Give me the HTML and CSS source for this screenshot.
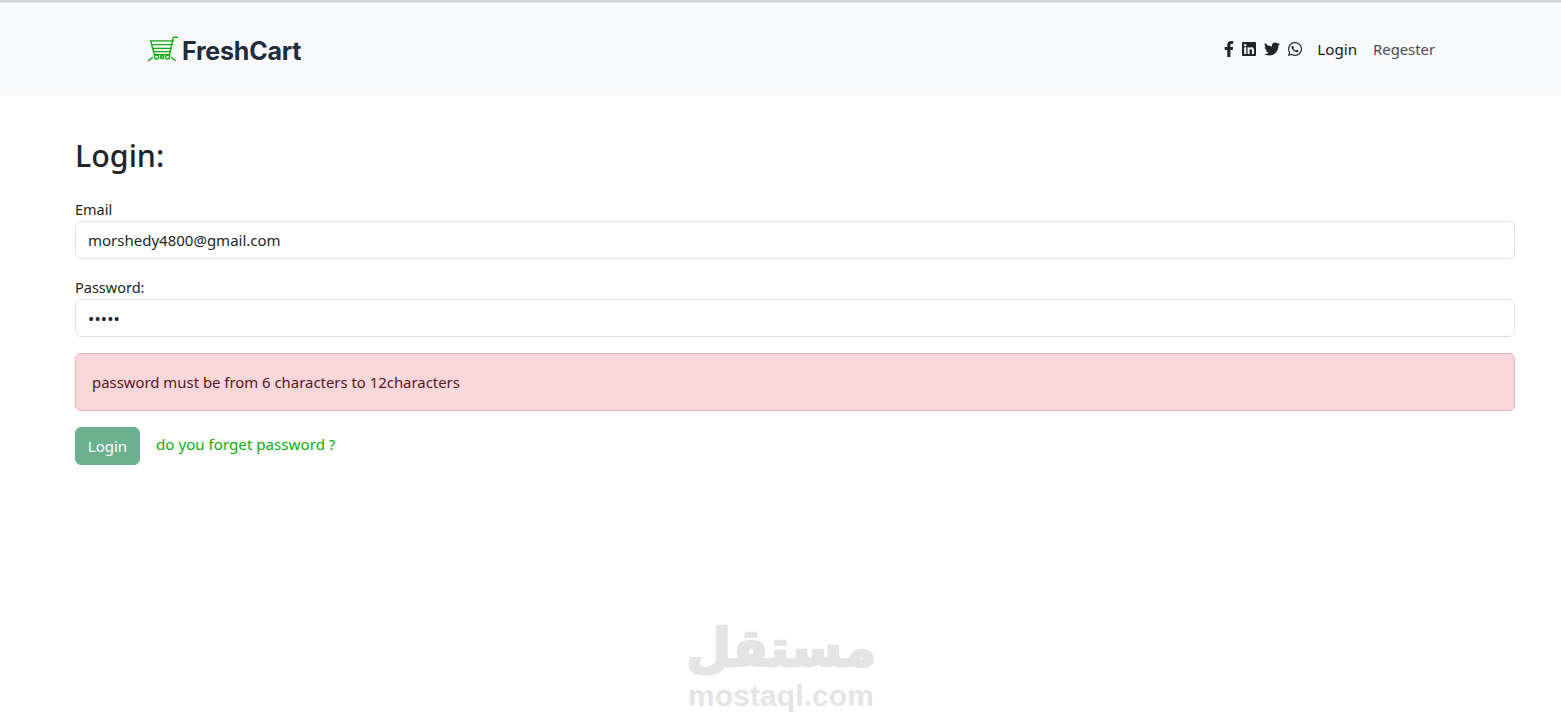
FILE: index.html
```html
<!DOCTYPE html>
<html lang="en">
<head>
<meta charset="utf-8">
<title>FreshCart</title>
<link rel="stylesheet" href="styles.css">
</head>
<body>
<div class="topline"></div>
<nav class="navbar">
  <a class="brand" href="#">
    <svg class="cart" viewBox="0 0 32 26" width="32" height="26" fill="none" stroke="#14ab14" stroke-width="1.4">
      <path d="M31 1.200h-3.400c-1 0-1.500.5-1.800 1.500L22.600 18.600H7.400L3.700 4.900h23.500"/>
      <path d="M4.600 8.600h21.600M5.700 12.400h19.600M6.400 15.600h17.600" stroke-width="1.200"/>
      <circle cx="9.600" cy="21" r="2"/><circle cx="20.600" cy="21" r="2"/><rect x="13.800" y="19.800" width="2.600" height="2.600"/>
      <path d="M1 25c2-1.600 3.500-2.800 5-3.600M24 21.400c2 .8 3 1.800 4.500 3.600"/>
    </svg>
    <span class="brand-name">FreshCart</span>
  </a>
  <div class="nav-right">
    <div class="socials">
      <svg class="ic ic-f" viewBox="0 0 320 512"><path d="M279.140 288l14.220-92.660h-88.910v-60.130c0-25.350 12.420-50.060 52.240-50.060h40.420V6.260S260.430 0 225.360 0c-73.220 0-121.080 44.380-121.080 124.720v70.620H22.890V288h81.390v224h100.170V288z"/></svg>
      <svg class="ic ic-in" viewBox="0 0 448 512"><path d="M416 32H31.900C14.300 32 0 46.500 0 64.300v383.400C0 465.500 14.300 480 31.900 480H416c17.600 0 32-14.500 32-32.300V64.300c0-17.800-14.400-32.300-32-32.300zM135.400 416H69V202.200h66.500V416zm-33.200-243c-21.300 0-38.500-17.300-38.500-38.500S80.900 96 102.200 96c21.200 0 38.500 17.300 38.500 38.500 0 21.300-17.200 38.500-38.500 38.500zm282.100 243h-66.400V312c0-24.800-.5-56.700-34.500-56.700-34.600 0-39.900 27-39.900 54.900V416h-66.400V202.200h63.700v29.200h.9c8.900-16.800 30.600-34.500 62.900-34.500 67.200 0 79.700 44.300 79.700 101.900V416z"/></svg>
      <svg class="ic ic-tw" viewBox="0 0 512 512"><path d="M459.370 151.716c.325 4.548.325 9.097.325 13.645 0 138.720-105.583 298.558-298.558 298.558-59.452 0-114.680-17.219-161.137-47.106 8.447.974 16.568 1.299 25.340 1.299 49.055 0 94.213-16.568 130.274-44.832-46.132-.975-84.792-31.188-98.112-72.772 6.498.974 12.995 1.624 19.818 1.624 9.421 0 18.843-1.300 27.614-3.573-48.081-9.747-84.143-51.980-84.143-102.985v-1.299c13.969 7.797 30.214 12.670 47.431 13.319-28.264-18.843-46.781-51.005-46.781-87.391 0-19.492 5.197-37.360 14.294-52.954 51.655 63.675 129.300 105.258 216.365 109.807-1.624-7.797-2.599-15.918-2.599-24.040 0-57.828 46.782-104.934 104.934-104.934 30.213 0 57.502 12.670 76.670 33.137 23.715-4.548 46.456-13.320 66.599-25.340-7.798 24.366-24.366 44.833-46.132 57.827 21.117-2.273 41.584-8.122 60.426-16.243-14.292 20.791-32.161 39.308-52.628 54.253z"/></svg>
      <svg class="ic ic-wa" viewBox="0 0 448 512"><path d="M380.900 97.100C339 55.100 283.200 32 223.900 32c-122.400 0-222 99.600-222 222 0 39.100 10.200 77.300 29.600 111L0 480l117.700-30.900c32.400 17.700 68.900 27 106.100 27h.1c122.300 0 224.100-99.600 224.100-222 0-59.300-25.200-115-67.100-157zm-157 341.600c-33.200 0-65.700-8.900-94-25.700l-6.700-4-69.800 18.300L72 359.200l-4.400-7c-18.500-29.400-28.200-63.300-28.200-98.200 0-101.700 82.800-184.500 184.600-184.500 49.300 0 95.600 19.200 130.400 54.100 34.800 34.900 56.200 81.200 56.100 130.500 0 101.800-84.900 184.600-186.600 184.600zm101.200-138.200c-5.500-2.800-32.800-16.200-37.900-18-5.100-1.900-8.800-2.800-12.500 2.800-3.700 5.600-14.300 18-17.600 21.800-3.200 3.700-6.500 4.200-12 1.400-32.600-16.300-54-29.100-75.500-66-5.700-9.800 5.700-9.100 16.300-30.300 1.800-3.700.9-6.900-.5-9.700-1.400-2.800-12.500-30.100-17.100-41.200-4.500-10.800-9.100-9.300-12.500-9.500-3.200-.2-6.900-.2-10.600-.2-3.700 0-9.700 1.400-14.800 6.900-5.100 5.600-19.400 19-19.400 46.300 0 27.300 19.900 53.700 22.600 57.400 2.800 3.700 39.100 59.700 94.800 83.800 35.200 15.200 49 16.500 66.600 13.900 10.700-1.600 32.800-13.400 37.400-26.400 4.600-13 4.600-24.100 3.200-26.400-1.300-2.500-5-3.900-10.500-6.600z"/></svg>
    </div>
    <a class="nav-link active" href="#">Login</a>
    <a class="nav-link" href="#">Regester</a>
  </div>
</nav>
<main class="container">
  <h1 class="title">Login:</h1>
  <form class="form">
    <label class="label" for="email">Email</label>
    <input class="control" id="email" type="email" value="morshedy4800@gmail.com">
    <label class="label label-pass" for="pw">Password:</label>
    <input class="control control-pw" id="pw" type="password" value="abcde">
    <div class="alert">password must be from 6 characters to 12characters</div>
    <div class="actions">
      <button class="btn" type="button" disabled>Login</button>
      <a class="forgot" href="#">do you forget password ?</a>
    </div>
  </form>
</main>
<div class="watermark">
  <div class="wm-ar" lang="ar" dir="rtl">مستقل</div>
  <div class="wm-en">mostaql.com</div>
</div>
</body>
</html>
```
FILE: styles.css
```css
* { box-sizing: border-box; }
html, body { height: 100%; }
body {
  margin: 0;
  background: #fff;
  color: #212529;
  font-family: "Noto Sans", "Open Sans", sans-serif;
  font-size: 15px;
  line-height: 24px;
  overflow: hidden;
  position: relative;
}
a { text-decoration: none; }
.topline { height: 3px; background: #d3d4d8; border-bottom: 1px solid #e4e5e8; }
.navbar {
  height: 92px;
  background: #f8f9fa;
  display: flex;
  align-items: center;
  justify-content: space-between;
  padding: 0 126px 0 147px;
}
.brand { display: flex; align-items: center; gap: 3px; }
.cart { display: block; }
.brand-name {
  font-family: Inter, sans-serif;
  font-weight: 700;
  font-size: 25px;
  letter-spacing: -0.2px;
  color: #212b3a;
  padding-top: 3px;
}
.nav-right { display: flex; align-items: center; }
.socials { display: flex; align-items: center; gap: 8px; margin-right: 15px; margin-top: -1px; }
.ic { display: block; height: 16px; fill: #212529; }
.ic-f { width: 10px; }
.ic-in { width: 14px; }
.ic-tw { width: 16px; }
.ic-wa { width: 14px; }
.nav-link { color: #4a4d50; font-size: 14.800px; }
.nav-link.active { color: #16181b; font-size: 15.200px; margin-right: 16px; }
.container { padding: 39px 46px 0 75px; }
.title {
  margin: 0 0 19px;
  font-size: 30.400px;
  font-weight: 500;
  line-height: 44px;
  color: #212529;
}
.form { display: flex; flex-direction: column; }
.label { display: block; height: 24px; font-size: 14.500px; line-height: 24px; }
.label-pass { margin-top: 16px; }
.control {
  display: block;
  width: 100%;
  height: 38px;
  padding: 6px 12px;
  border: 1px solid #dee2e6;
  border-radius: 6px;
  background: #fff;
  color: #212529;
  font: inherit;
  outline: none;
}
.control-pw { font-size: 16.500px; letter-spacing: .2px; }
.alert {
  margin-top: 16px;
  height: 58px;
  padding: 16px;
  background: #f8d7da;
  border: 1px solid #f1aeb5;
  border-radius: 6px;
  color: #58151c;
  font-size: 14.900px;
}
.actions { display: flex; align-items: flex-start; margin-top: 16px; }
.btn {
  width: 65px;
  height: 38px;
  padding: 0;
  border: 1px solid #6bb18f;
  border-radius: 6px;
  background: #6bb18f;
  color: #fff;
  font: inherit;
}
.forgot { margin-left: 16px; margin-top: 5px; color: #0aad0a; font-size: 15.150px; }
.watermark {
  position: absolute;
  left: 681px;
  top: 618px;
  width: 200px;
  text-align: center;
  color: #e4e4e4;
}
.wm-ar {
  font-family: "DejaVu Sans", sans-serif;
  font-weight: 700;
  font-size: 52px;
  line-height: 60px;
  -webkit-text-stroke: 2.500px #e4e4e4;
}
.wm-en {
  margin-top: 3px;
  font-family: "Liberation Sans", sans-serif;
  font-weight: 700;
  font-size: 30px;
  line-height: 30px;
  letter-spacing: 0.1px;
}
```
